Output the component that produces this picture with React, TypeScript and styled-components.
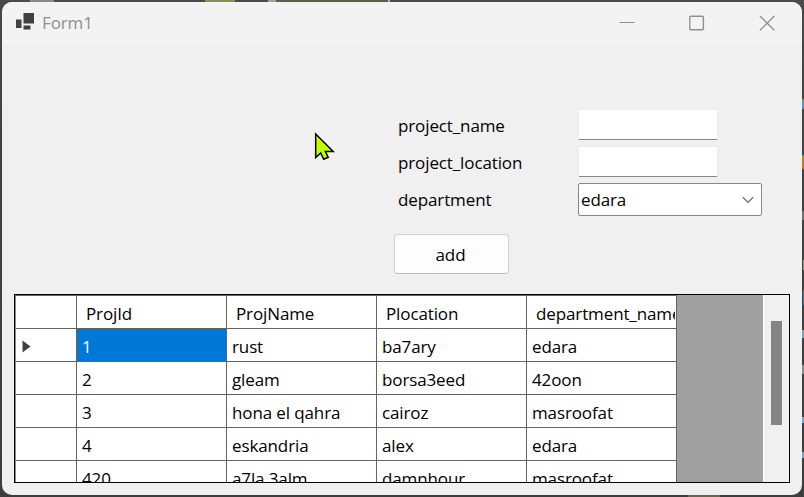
import React from "react";
import styled, { createGlobalStyle } from "styled-components";

const GlobalStyle = createGlobalStyle`
  * { box-sizing: border-box; }
  body { margin: 0; overflow: hidden; background: #434343; }
`;

const Desktop = styled.div`
  position: relative;
  width: 804px;
  height: 497px;
  padding: 2px;
  overflow: hidden;
  background: linear-gradient(180deg, #4c4c4b 0, #484848 3px, #434343 60px, #3d3d3d 100%);
  font-family: "Open Sans", "Segoe UI", sans-serif;
  font-size: 17px;
  color: #000;
`;

const DesktopSpeck = styled.i<{ $x: number; $y: number; $w: number; $h: number; $color: string }>`
  position: absolute;
  left: ${(p) => p.$x}px;
  top: ${(p) => p.$y}px;
  width: ${(p) => p.$w}px;
  height: ${(p) => p.$h}px;
  background: ${(p) => p.$color};
`;

const Window = styled.main`
  position: relative;
  display: flex;
  flex-direction: column;
  width: 800px;
  height: 493px;
  border-radius: 10px;
  overflow: hidden;
  background: #f0f0f0;
`;

const TitleBar = styled.header`
  display: flex;
  align-items: center;
  flex: none;
  height: 43px;
  padding: 0 0 2px 13px;
  background: #f3f3f3;
`;

const Title = styled.h1`
  flex: 1;
  margin: 0 0 0 7px;
  font-size: 17px;
  font-weight: 400;
  line-height: 24px;
  color: #8f8f8f;
`;

const CaptionButton = styled.button`
  display: flex;
  align-items: center;
  justify-content: center;
  width: 70px;
  height: 41px;
  padding: 0;
  border: 0;
  background: none;
`;

const Text = styled.span`
  letter-spacing: -0.12px;
  white-space: nowrap;
`;

const Form = styled.form`
  display: grid;
  grid-template-columns: 180px 184px;
  grid-auto-rows: 37px;
  margin: 63px 0 0 396px;
`;

const FieldLabel = styled.label`
  line-height: 36px;
`;

const TextBox = styled.input`
  width: 140px;
  height: 31px;
  margin: 1px 0 0;
  border: 1px solid #ececec;
  border-bottom: 1px solid #868686;
  border-radius: 2px;
  outline: 0;
  background: #fff;
`;

const ComboBox = styled.div`
  display: flex;
  align-items: center;
  justify-content: space-between;
  width: 184px;
  height: 33px;
  margin-top: 1px;
  padding: 0 7px 0 2px;
  border: 1px solid #868686;
  border-radius: 2px;
  background: #fff;
  line-height: 31px;
`;

const AddButton = styled.button`
  flex: none;
  width: 115px;
  height: 40px;
  margin: 15px 0 0 392px;
  padding: 0 2px 0 0;
  border: 1px solid #d0d0d0;
  border-bottom-color: #bdbdbd;
  border-radius: 4px;
  background: #fdfdfd;
  font: inherit;
  color: inherit;
`;

const DataGrid = styled.section`
  display: flex;
  flex: none;
  width: 776px;
  height: 189px;
  margin: 20px 0 0 12px;
  border: 1px solid #000;
  overflow: hidden;
  background: #a0a0a0;
`;

const Rows = styled.div`
  flex: none;
  width: 662px;
  border-left: 1px solid #8a8a8a;
  border-top: 1px solid #646464;
`;

const Row = styled.div`
  display: grid;
  grid-template-columns: 61px repeat(4, 150px);
  height: 33px;
`;

const Cell = styled.div<{ $head?: boolean; $selected?: boolean }>`
  padding-left: ${(p) => (p.$head ? 9 : 5)}px;
  border-right: 1px solid #646464;
  border-bottom: 1px solid #646464;
  overflow: hidden;
  line-height: 35px;
  background: ${(p) => (p.$selected ? "#0078d7" : "#fff")};
  color: ${(p) => (p.$selected ? "#fff" : "#000")};
`;

const HeaderText = styled(Text)`
  display: block;
  width: 139px;
  overflow: hidden;
`;

const RowMarker = styled.div`
  display: flex;
  align-items: center;
  padding: 3px 0 0 6px;
  border-right: 1px solid #646464;
  border-bottom: 1px solid #646464;
  background: #fff;
`;

const ScrollTrack = styled.div`
  width: 26px;
  margin-left: auto;
  padding: 26px 0 0 7px;
  border-left: 1px solid #fff;
  background: #f0f0f0;
`;

const ScrollThumb = styled.div`
  width: 11px;
  height: 104px;
  background: #858585;
`;

const Pointer = styled.svg`
  position: absolute;
  left: 310px;
  top: 128px;
`;

const columns = ["ProjId", "ProjName", "Plocation", "department_name"];

const projects = [
  ["1", "rust", "ba7ary", "edara"],
  ["2", "gleam", "borsa3eed", "42oon"],
  ["3", "hona el qahra", "cairoz", "masroofat"],
  ["4", "eskandria", "alex", "edara"],
  ["420", "a7la 3alm", "damnhour", "masroofat"],
];

const specks: [number, number, number, number, string][] = [
  [30, 0, 24, 2, "#8a8a88"],
  [205, 0, 30, 2, "#83905a"],
  [268, 0, 8, 2, "#a0a0a0"],
  [276, 0, 112, 2, "#56604b"],
  [388, 0, 2, 2, "#b0b0a8"],
  [802, 99, 2, 10, "#5b8fc0"],
  [802, 155, 2, 14, "#c07c1c"],
  [802, 211, 2, 9, "#707070"],
  [803, 260, 1, 10, "#99938a"],
  [803, 290, 1, 15, "#4277a5"],
  [802, 330, 2, 8, "#80a0b8"],
  [802, 365, 2, 9, "#8a8a8a"],
  [802, 417, 2, 6, "#7e9fc7"],
  [802, 452, 2, 6, "#7e9fc7"],
  [688, 495, 32, 2, "#68664c"],
];

export default function App() {
  return (
    <Desktop>
      <GlobalStyle />
      {specks.map(([x, y, w, h, color]) => (
        <DesktopSpeck key={`${x}-${y}`} $x={x} $y={y} $w={w} $h={h} $color={color} />
      ))}
      <Window>
        <TitleBar>
          <svg width="20" height="19" viewBox="0 0 20 19" fill="#404040">
            <path d="M8.500 0h10.500v10.500H8.500zM1 6.500h5.500v8.500H1zM8.500 12.500h7v4h-7z" />
          </svg>
          <Title><Text>Form1</Text></Title>
          <CaptionButton aria-label="Minimize">
            <svg width="16" height="16" stroke="#8f8f8f"><path d="M.5 7.500h15" /></svg>
          </CaptionButton>
          <CaptionButton aria-label="Maximize">
            <svg width="16" height="16" fill="none" stroke="#8f8f8f" strokeWidth="1.4">
              <rect x=".8" y="1.200" width="13.600" height="13.600" rx="1.200" />
            </svg>
          </CaptionButton>
          <CaptionButton aria-label="Close">
            <svg width="16" height="16" stroke="#8f8f8f" strokeWidth="1.300"><path d="M1 1l14.300 14.300M15.300 1L1 15.300" /></svg>
          </CaptionButton>
        </TitleBar>

        <Form>
          <FieldLabel><Text>project_name</Text></FieldLabel>
          <TextBox aria-label="project_name" />
          <FieldLabel><Text>project_location</Text></FieldLabel>
          <TextBox aria-label="project_location" />
          <FieldLabel><Text>department</Text></FieldLabel>
          <ComboBox>
            <Text>edara</Text>
            <svg width="12" height="8" fill="none" stroke="#606060" strokeWidth="1.200"><path d="M.8 1.200L6 6.400l5.200-5.200" /></svg>
          </ComboBox>
        </Form>
        <AddButton><Text>add</Text></AddButton>

        <DataGrid>
          <Rows>
            <Row>
              <RowMarker />
              {columns.map((name) => (
                <Cell key={name} $head><HeaderText>{name}</HeaderText></Cell>
              ))}
            </Row>
            {projects.map((project, r) => (
              <Row key={project[0]}>
                <RowMarker>
                  {r === 0 && <svg width="9" height="13" fill="#404040"><path d="M.5.5l8 6-8 6z" /></svg>}
                </RowMarker>
                {project.map((value, c) => (
                  <Cell key={c} $selected={r === 0 && c === 0}><Text>{value}</Text></Cell>
                ))}
              </Row>
            ))}
          </Rows>
          <ScrollTrack><ScrollThumb /></ScrollTrack>
        </DataGrid>
      </Window>
      <Pointer width="28" height="36" viewBox="0 0 28 36">
        <path d="M5.700 6v23.500l5-4.500 3 6.300 4.500-2-2.800-5.800h7.800z" fill="#bfff00" stroke="#000" strokeWidth="1.500" />
      </Pointer>
    </Desktop>
  );
}
